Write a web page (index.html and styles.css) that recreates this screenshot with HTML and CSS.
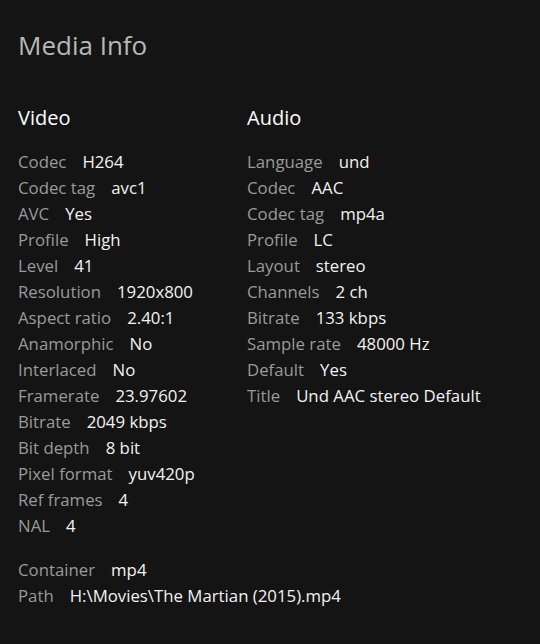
FILE: index.html
```html
<!DOCTYPE html>
<html>
<head>
<meta charset="utf-8">
<link rel="stylesheet" href="styles.css">
</head>
<body>
<div class="page">
  <h1 class="title">Media Info</h1>
  <div class="streams">
    <section class="stream">
      <h2 class="stream-title">Video</h2>
      <div class="row"><span class="label">Codec</span><span class="value">H264</span></div>
      <div class="row"><span class="label">Codec tag</span><span class="value">avc1</span></div>
      <div class="row"><span class="label">AVC</span><span class="value">Yes</span></div>
      <div class="row"><span class="label">Profile</span><span class="value">High</span></div>
      <div class="row"><span class="label">Level</span><span class="value">41</span></div>
      <div class="row"><span class="label">Resolution</span><span class="value">1920x800</span></div>
      <div class="row"><span class="label">Aspect ratio</span><span class="value">2.40:1</span></div>
      <div class="row"><span class="label">Anamorphic</span><span class="value">No</span></div>
      <div class="row"><span class="label">Interlaced</span><span class="value">No</span></div>
      <div class="row"><span class="label">Framerate</span><span class="value">23.97602</span></div>
      <div class="row"><span class="label">Bitrate</span><span class="value">2049 kbps</span></div>
      <div class="row"><span class="label">Bit depth</span><span class="value">8 bit</span></div>
      <div class="row"><span class="label">Pixel format</span><span class="value">yuv420p</span></div>
      <div class="row"><span class="label">Ref frames</span><span class="value">4</span></div>
      <div class="row"><span class="label">NAL</span><span class="value">4</span></div>
    </section>
    <section class="stream">
      <h2 class="stream-title">Audio</h2>
      <div class="row"><span class="label">Language</span><span class="value">und</span></div>
      <div class="row"><span class="label">Codec</span><span class="value">AAC</span></div>
      <div class="row"><span class="label">Codec tag</span><span class="value">mp4a</span></div>
      <div class="row"><span class="label">Profile</span><span class="value">LC</span></div>
      <div class="row"><span class="label">Layout</span><span class="value">stereo</span></div>
      <div class="row"><span class="label">Channels</span><span class="value">2 ch</span></div>
      <div class="row"><span class="label">Bitrate</span><span class="value">133 kbps</span></div>
      <div class="row"><span class="label">Sample rate</span><span class="value">48000 Hz</span></div>
      <div class="row"><span class="label">Default</span><span class="value">Yes</span></div>
      <div class="row"><span class="label">Title</span><span class="value">Und AAC stereo Default</span></div>
    </section>
  </div>
  <div class="general">
    <div class="row"><span class="label">Container</span><span class="value">mp4</span></div>
    <div class="row"><span class="label">Path</span><span class="value">H:\Movies\The Martian (2015).mp4</span></div>
  </div>
</div>
</body>
</html>
```
FILE: styles.css
```css
html, body {
  margin: 0;
  padding: 0;
  background: #141414;
}
body {
  font-family: "Open Sans", "Noto Sans", sans-serif;
  color: #eeeeee;
  width: 540px;
  height: 644px;
  overflow: hidden;
}
.page {
  padding: 26px 18px 0 18px;
}
.title {
  margin: 0;
  font-size: 26px;
  font-weight: 400;
  line-height: 38px;
  color: #b8b8b8;
}
.streams {
  display: flex;
  margin-top: 39px;
}
.stream {
  width: 229px;
}
.stream-title {
  margin: 0 0 16px 0;
  font-size: 20px;
  font-weight: 400;
  line-height: 30px;
  color: #ffffff;
}
.row {
  font-size: 16.8px;
  line-height: 26px;
  white-space: nowrap;
}
.label {
  color: #9a9a9a;
  margin-right: 16px;
}
.value {
  color: #f2f2f2;
}
.general {
  margin-top: 18px;
}
```
